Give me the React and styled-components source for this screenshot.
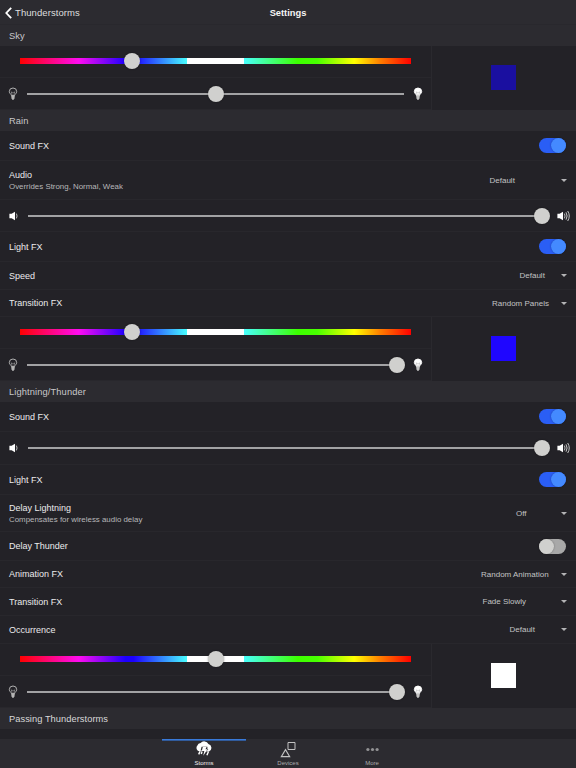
import React from "react"
import styled, { createGlobalStyle } from "styled-components"

const GlobalStyle = createGlobalStyle`
  * {
    box-sizing: border-box;
  }
  body {
    margin: 0;
    background: #232227;
    overflow: hidden;
  }
`

const Screen = styled.div`
  display: flex;
  flex-direction: column;
  width: 576px;
  height: 768px;
  background: #232227;
  color: #e4e4e5;
  font-family: "Liberation Sans", Arial, sans-serif;
  font-size: 9px;
  white-space: nowrap;
`

const Header = styled.header`
  display: grid;
  grid-template-columns: 1fr auto 1fr;
  align-items: center;
  height: 25px;
  flex: none;
  padding: 1px 5px 0;
  background: #2c2b30;
  border-bottom: 1px solid #29282d;
`

const Back = styled.div`
  display: flex;
  align-items: center;
  gap: 3px;
  font-size: 9.5px;
  letter-spacing: 0.08px;
  color: #dededf;
`

const Title = styled.h1`
  margin: 0;
  font-size: 9.3px;
  font-weight: bold;
  color: #f5f5f5;
`

const SectionTitle = styled.h2`
  display: flex;
  align-items: center;
  flex: none;
  height: 21px;
  margin: 0;
  padding: 0 9px;
  background: #2c2b30;
  color: ${props => (props.$bright ? "#d8d8d9" : "#c8c8ca")};
  font-size: 9.3px;
  font-weight: normal;
  letter-spacing: ${props => (props.$bright ? 0.05 : 0.12)}px;
`

const Row = styled.div`
  display: flex;
  align-items: center;
  justify-content: space-between;
  flex: none;
  height: ${props => props.$height}px;
  padding: 0 9px;
  border-bottom: 1px solid #28272c;
`

const Label = styled.div`
  font-size: 9px;
  line-height: 12px;
  color: #ebebec;
`

const Hint = styled.div`
  font-size: 7.9px;
  line-height: 11px;
  color: #b8b8ba;
`

const Select = styled.div`
  display: flex;
  align-items: center;
  justify-content: space-between;
  width: ${props => props.$width}px;
  color: #c2c2c4;
  font-size: 8px;
`

const Caret = styled.span`
  border: 3px solid transparent;
  border-top-color: #b4b4b6;
  border-bottom: 0;
`

const Track = styled.div`
  display: flex;
  justify-content: ${props => (props.$on ? "flex-end" : "flex-start")};
  width: 27px;
  height: 15px;
  margin-right: 1px;
  border-radius: 8px;
  background: ${props => (props.$on ? "#2a5ef5" : "#a8a8a8")};
`

const Knob = styled.span`
  width: 15px;
  height: 15px;
  border-radius: 50%;
  background: ${props => (props.$on ? "#448aff" : "#d0d0ce")};
  box-shadow: 0 0 2px rgba(0, 0, 0, 0.35);
`

const SliderRow = styled.div`
  display: flex;
  align-items: center;
  flex: none;
  height: ${props => props.$height}px;
  padding: ${props => props.$padding};
  border-bottom: 1px solid #28272c;
`

const Rail = styled.div`
  position: relative;
  flex: 1;
  height: ${props => (props.$rainbow ? 6 : 2)}px;
  margin: ${props => props.$margin || 0};
  background: ${props =>
    props.$rainbow
      ? `linear-gradient(90deg, #f00 0%, #ff0cf0 15%, #1c00ff 27%, #1c00ff 29%,
        #48ffff 42.8%, #fff 42.8%, #fff 57.2%, #48ffff 57.2%, #3cff00 71%,
        #48ff00 76%, #ff0 85.5%, #ff8000 92%, #f00 100%)`
      : "#a2a2a4"};
`

const Thumb = styled.span`
  position: absolute;
  top: 50%;
  width: 16px;
  height: 16px;
  border-radius: 50%;
  background: #d0d0ce;
  box-shadow: 0 0 2px rgba(0, 0, 0, 0.4);
  transform: translate(-50%, -50%);
`

const ColorPanel = styled.div`
  display: grid;
  grid-template-columns: 432px 1fr;
  flex: none;
  height: 64px;
`

const Sliders = styled.div`
  border-right: 1px solid #2a292e;
`

const Preview = styled.div`
  display: flex;
  align-items: center;
  justify-content: center;
  padding: 0 1px 1px 0;
`

const Swatch = styled.span`
  width: 25px;
  height: 25px;
  background: ${props => props.$color};
`

const TabBar = styled.nav`
  display: flex;
  justify-content: center;
  height: 29px;
  margin-top: auto;
  background: #2c2b30;
`

const Tab = styled.div`
  display: flex;
  flex-direction: column;
  align-items: center;
  justify-content: space-between;
  width: 84px;
  padding: 1px 0;
  border-top: 1px solid ${props => (props.$active ? "#397ad9" : "transparent")};
  box-shadow: ${props => (props.$active ? "inset 0 1px #315b9c" : "none")};
  color: ${props => (props.$active ? "#f0f0f0" : "#ababad")};
  font-size: 6px;
  line-height: 8px;
`

const Bulb = ({ lit }) => (
  <svg width="10" height="14" viewBox="0 0 10 14" fill="none">
    <path
      d="M3.4 8.5C3.2 7 1.3 6.5 1.3 4.6a3.7 3.6 0 0 1 7.4 0C8.7 6.5 6.8 7 6.6 8.5z"
      fill={lit ? "#fff" : "none"}
      stroke={lit ? "#fff" : "#c0c0c0"}
      strokeWidth="0.9"
    />
    <path
      d="M3.2 4.6l1.2 4.2M6.8 4.6L5.6 8.8M3.2 5l1 .7.8-.7.8.7 1-.7"
      stroke={lit ? "#bbb" : "#a5a5a5"}
      strokeWidth="0.6"
    />
    <path d="M3.1 8.6h3.8l-.4 2.6L5.4 13h-.8l-1.1-1.8z" fill={lit ? "#c4c4c4" : "#b5b5b5"} />
  </svg>
)

const Speaker = ({ loud }) => (
  <svg width={loud ? 13 : 9} height="12" viewBox={loud ? "0 0 13 12" : "0 0 9 12"} fill="none">
    <path d="M.4 3.8h2.2L6 1.8v8.4L2.6 8.2H.4z" fill="#fff" />
    <path d="M7.4 3.6q1.3 2.4 0 4.8" stroke="#bbb" strokeWidth="1" />
    {loud && (
      <path
        d="M9 2.3q2.2 3.7 0 7.4M10.7 1q3.1 5 0 10"
        stroke="#c6c6c6"
        strokeWidth="1"
      />
    )}
  </svg>
)

const StormIcon = () => (
  <svg width="16" height="16" viewBox="0 0 16 16">
    <path
      d="M3.6 10.4A3.5 3.5 0 0 1 1.4 4.6 3.5 3.5 0 0 1 4.6 2 4.7 4.7 0 0 1 12.4 3 3.9 3.9 0 0 1 13 10.4z"
      fill="#fff"
    />
    <path d="M5.6 5.8h5.8v2.4h1L9.6 11H6.5V9.6H4.6z" fill="#2c2b30" />
    <path d="M6.8 6h3.8L9.5 8.3h2L7.3 14.8l1-4.8H5.8z" fill="#fff" />
    <path
      d="M3.9 10.6l-1.2 2.8M6 11l-.8 2M12.5 10.4l-1.6 3.8"
      stroke="#fff"
      strokeWidth="1.4"
    />
  </svg>
)

const DevicesIcon = () => (
  <svg width="16" height="17" viewBox="0 0 16 17" fill="none" stroke="#c2c2c2">
    <path d="M8 1.5h7v7H8z" />
    <path d="M5.5 8.6l4.2 7H1.3z" strokeWidth="1.1" />
  </svg>
)

const MoreIcon = () => (
  <svg width="13" height="17" viewBox="0 0 13 17" fill="#929294">
    <circle cx="1.9" cy="8.5" r="1.6" />
    <circle cx="6.5" cy="8.5" r="1.6" />
    <circle cx="11.1" cy="8.5" r="1.6" />
  </svg>
)

const ToggleRow = ({ label, height = 30, on = true }) => (
  <Row $height={height}>
    <Label>{label}</Label>
    <Track $on={on}>
      <Knob $on={on} />
    </Track>
  </Row>
)

const SelectRow = ({ label, hint, value, width, height = 28 }) => (
  <Row $height={height}>
    <div>
      <Label>{label}</Label>
      {hint && <Hint>{hint}</Hint>}
    </div>
    <Select $width={width}>
      {value}
      <Caret />
    </Select>
  </Row>
)

const VolumeRow = ({ height }) => (
  <SliderRow $height={height} $padding="0 6px 0 9px">
    <Speaker />
    <Rail $margin="0 15.5px 0 10px">
      <Thumb style={{ left: "100%" }} />
    </Rail>
    <Speaker loud />
  </SliderRow>
)

const ColorControl = ({ hue, brightness, color }) => (
  <ColorPanel>
    <Sliders>
      <SliderRow $height={32} $padding="0 20px 1px 20px">
        <Rail $rainbow>
          <Thumb style={{ left: `${hue}%` }} />
        </Rail>
      </SliderRow>
      <SliderRow $height={32} $padding="0 8px">
        <Bulb />
        <Rail $margin="0 9px">
          <Thumb style={{ left: `${brightness}%` }} />
        </Rail>
        <Bulb lit />
      </SliderRow>
    </Sliders>
    <Preview>
      <Swatch $color={color} />
    </Preview>
  </ColorPanel>
)

const App = () => (
  <>
    <GlobalStyle />
    <Screen>
      <Header>
        <Back>
          <svg width="7" height="12" viewBox="0 0 7 12" fill="none">
            <path d="M6.2 .8L1.3 6l4.9 5.2" stroke="#fff" strokeWidth="1.8" />
          </svg>
          Thunderstorms
        </Back>
        <Title>Settings</Title>
      </Header>

      <SectionTitle>Sky</SectionTitle>
      <ColorControl hue={28.6} brightness={50} color="#1a0fa0" />

      <SectionTitle>Rain</SectionTitle>
      <ToggleRow label="Sound FX" />
      <SelectRow
        label="Audio"
        hint="Overrides Strong, Normal, Weak"
        value="Default"
        width={77.5}
        height={39}
      />
      <VolumeRow height={32} />
      <ToggleRow label="Light FX" />
      <SelectRow label="Speed" value="Default" width={47.5} />
      <SelectRow label="Transition FX" value="Random Panels" width={75} height={27} />
      <ColorControl hue={28.6} brightness={98.2} color="#1f06ff" />

      <SectionTitle>Lightning/Thunder</SectionTitle>
      <ToggleRow label="Sound FX" />
      <VolumeRow height={33} />
      <ToggleRow label="Light FX" height={30} />
      <SelectRow
        label="Delay Lightning"
        hint="Compensates for wireless audio delay"
        value="Off"
        width={51}
        height={37}
      />
      <ToggleRow label="Delay Thunder" height={29} on={false} />
      <SelectRow label="Animation FX" value="Random Animation" width={86} height={27} />
      <SelectRow label="Transition FX" value="Fade Slowly" width={84.5} />
      <SelectRow label="Occurrence" value="Default" width={57.5} />
      <ColorControl hue={50} brightness={98.2} color="#fff" />

      <SectionTitle $bright>Passing Thunderstorms</SectionTitle>

      <TabBar>
        <Tab $active>
          <StormIcon />
          Storms
        </Tab>
        <Tab>
          <DevicesIcon />
          Devices
        </Tab>
        <Tab>
          <MoreIcon />
          More
        </Tab>
      </TabBar>
    </Screen>
  </>
)

export default App
